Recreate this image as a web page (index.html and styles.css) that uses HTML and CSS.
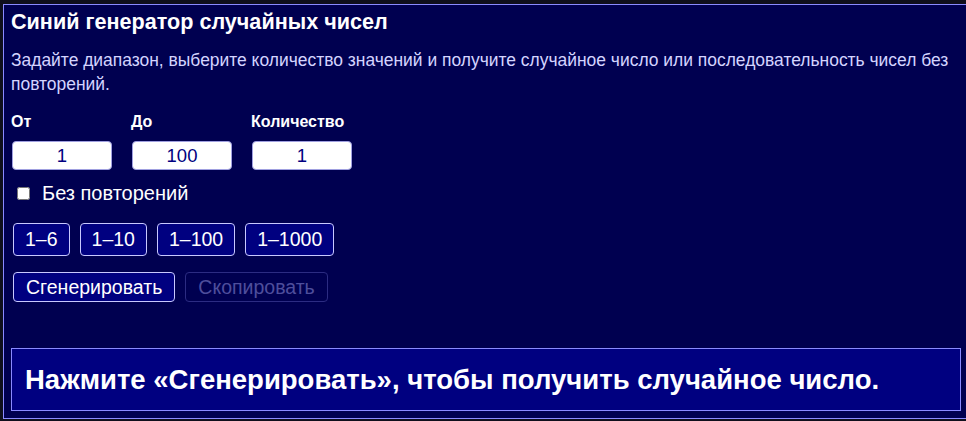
FILE: index.html
```html
<!DOCTYPE html>
<html lang="ru">
<head>
<meta charset="utf-8">
<title>Синий генератор случайных чисел</title>
<link rel="stylesheet" href="styles.css">
</head>
<body>
<main class="app">
  <h1 class="title">Синий генератор случайных чисел</h1>
  <p class="desc">Задайте диапазон, выберите количество значений и получите случайное число или последовательность чисел без повторений.</p>
  <div class="fields">
    <label class="field"><span class="field-label">От</span><input class="field-input" type="text" value="1"></label>
    <label class="field"><span class="field-label">До</span><input class="field-input" type="text" value="100"></label>
    <label class="field"><span class="field-label">Количество</span><input class="field-input" type="text" value="1"></label>
  </div>
  <label class="check"><input class="check-box" type="checkbox"><span>Без повторений</span></label>
  <div class="presets">
    <button class="btn preset">1–6</button>
    <button class="btn preset">1–10</button>
    <button class="btn preset">1–100</button>
    <button class="btn preset">1–1000</button>
  </div>
  <div class="actions">
    <button class="btn action">Сгенерировать</button>
    <button class="btn action" disabled>Скопировать</button>
  </div>
  <div class="result">Нажмите «Сгенерировать», чтобы получить случайное число.</div>
</main>
</body>
</html>
```
FILE: styles.css
```css
html, body {
  margin: 0;
  padding: 0;
  background: #0f0f1c;
  overflow: hidden;
}
* { box-sizing: border-box; }

.app {
  margin: 4px 0 0 3px;
  width: 967px;
  border: 1px solid #8a8aff;
  background: #000050;
  padding: 5px 8px 7px 7px;
  font-family: "Liberation Sans", Arial, sans-serif;
  color: #ffffff;
}

.title {
  margin: 0;
  font-size: 21.6px;
  line-height: 24px;
  font-weight: bold;
}

.desc {
  margin: 14px 0 0;
  font-size: 17.45px;
  line-height: 24px;
  color: #d4d4ff;
}

.fields {
  display: flex;
  gap: 20px;
  margin-top: 17px;
}
.field {
  display: flex;
  flex-direction: column;
  width: 100px;
}
.field-label {
  font-size: 16px;
  line-height: 18px;
  font-weight: bold;
  white-space: nowrap;
}
.field-input {
  margin: 10px 0 0 1px;
  width: 100px;
  height: 29px;
  border: 1px solid #a0a0e0;
  border-radius: 4px;
  background: #ffffff;
  color: #000080;
  font-family: "Liberation Sans", Arial, sans-serif;
  font-size: 18.5px;
  text-align: center;
  padding: 0;
}

.check {
  display: flex;
  align-items: center;
  margin-top: 13px;
  height: 20px;
  font-size: 20px;
  line-height: 20px;
}
.check-box {
  margin: 0 12px 0 6px;
  width: 13px;
  height: 13px;
}

.presets {
  display: flex;
  gap: 10px;
  margin-top: 20px;
}
.actions {
  display: flex;
  gap: 10px;
  margin-top: 16px;
}

.btn {
  font-family: "Liberation Sans", Arial, sans-serif;
  font-size: 19.5px;
  color: #ffffff;
  background: #000080;
  border: 1px solid #c8c8ff;
  border-radius: 4px;
  margin: 0 0 0 2px;
}
.preset {
  height: 33px;
  padding: 0 11px;
}
.action {
  height: 30px;
  padding: 0 12px;
}
.action + .action { margin-left: 0; }
.preset + .preset { margin-left: 0; }
.btn:disabled {
  background: #000050;
  color: #4e4e9c;
  border-color: #2c2c82;
}

.result {
  margin-top: 46px;
  height: 63px;
  border: 1px solid #8a8aff;
  background: #000080;
  padding: 0 13px;
  display: flex;
  align-items: center;
  font-size: 27.5px;
  font-weight: bold;
}
```
